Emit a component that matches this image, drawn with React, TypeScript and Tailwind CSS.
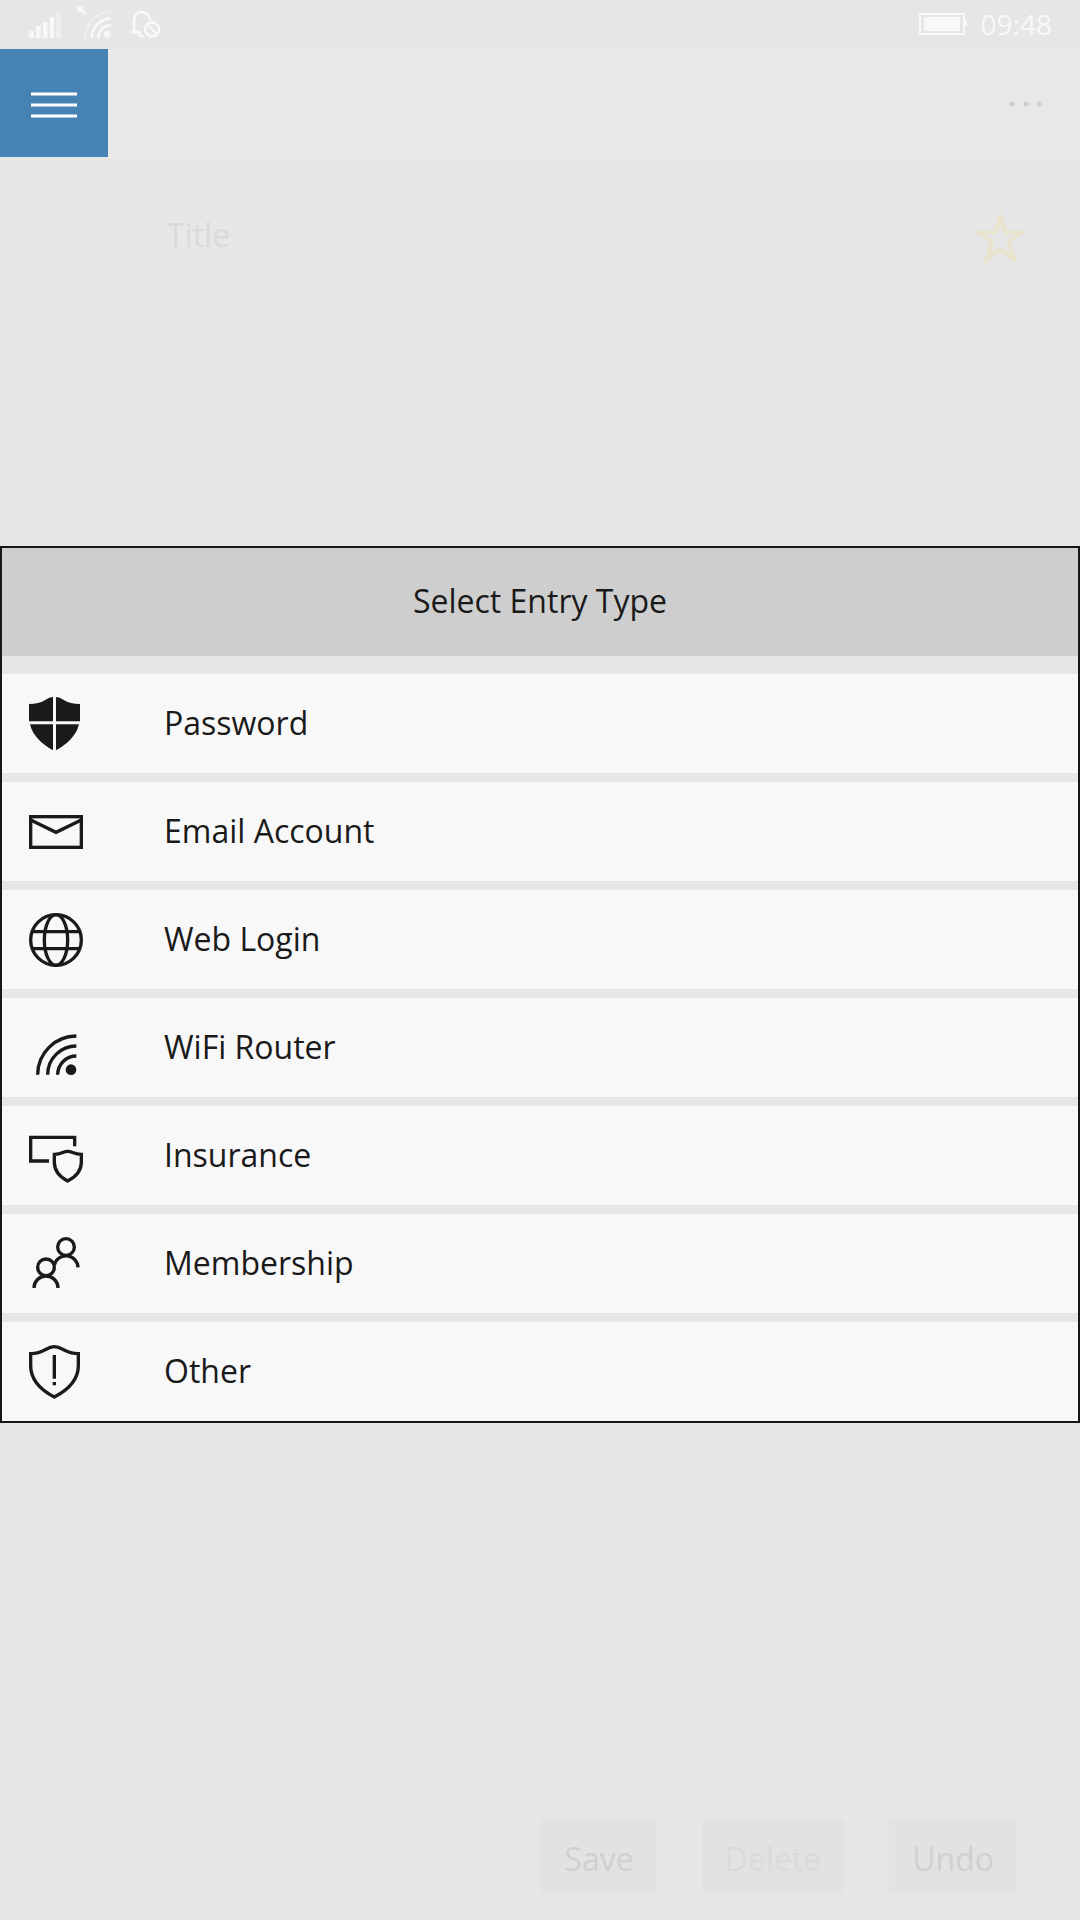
import { useState } from 'react';
import type { ReactNode } from 'react';

interface EntryType {
  id: string;
  label: string;
  icon: ReactNode;
}

const entryTypes: EntryType[] = [
  {
    id: 'password',
    label: 'Password',
    icon: (
      <g fill="currentColor" stroke="none">
        <path d="M0 21C20 21 36 17 50 8Q60 1 72 0V73H0Z" />
        <path d="M81 0Q93 1 103 8C117 17 133 21 153 21V73H81Z" />
        <path d="M3 82H72V160C40 143 10 115 3 82Z" />
        <path d="M81 82H150C143 115 113 143 81 160Z" />
      </g>
    ),
  },
  {
    id: 'email',
    label: 'Email Account',
    icon: (
      <>
        <rect x="5" y="35" width="152" height="92" />
        <path d="M5 45L81 82L157 45" />
      </>
    ),
  },
  {
    id: 'web',
    label: 'Web Login',
    icon: (
      <>
        <circle cx="81" cy="81" r="76" />
        <ellipse cx="81" cy="81" rx="35" ry="76" />
        <path d="M9 56H153M9 107H153" />
      </>
    ),
  },
  {
    id: 'wifi',
    label: 'WiFi Router',
    icon: (
      <>
        <path d="M26 161A116 116 0 0 1 142 45M56 161A86 86 0 0 1 142 75M86 161A56 56 0 0 1 142 105" />
        <circle cx="126" cy="146" r="16" fill="currentColor" stroke="none" />
      </>
    ),
  },
  {
    id: 'insurance',
    label: 'Insurance',
    icon: (
      <>
        <path d="M60 96H5V25H137V52" />
        <path d="M116 67C103 67 98 76 76 76V100C76 127 92 144 116 156C140 144 157 127 157 100V76C135 76 129 67 116 67Z" />
      </>
    ),
  },
  {
    id: 'membership',
    label: 'Membership',
    icon: (
      <>
        <circle cx="111" cy="30" r="25" />
        <path d="M76 84A36 36 0 0 1 147 91" />
        <circle cx="51" cy="91" r="25" />
        <path d="M15 153A36 36 0 0 1 87 153" />
      </>
    ),
  },
  {
    id: 'other',
    label: 'Other',
    icon: (
      <>
        <path d="M76 5C50 5 48 25 5 26V62C5 107 40 137 76 156C112 137 148 107 148 62V26C105 25 102 5 76 5Z" />
        <path d="M76 30V101M76 111V121" />
      </>
    ),
  },
];

function StatusBar() {
  return (
    <div className="flex h-[49px] items-center justify-between px-7 pb-px text-[#f8f8f8]">
      <svg width="134" height="40" viewBox="84 12 402 120" fill="none" stroke="currentColor" strokeWidth="8">
        <g fill="currentColor" stroke="none">
          <path d="M87 93H102V114H87ZM108 78H122V114H108ZM129 66H142V114H129ZM149 51H162V114H149Z" />
          <path d="M168 39H183V114H168Z" opacity="0.45" />
          <path d="M231 18H252L246 25L259 39L253 45L239 32L231 39Z" />
          <circle cx="322" cy="103" r="11" />
        </g>
        <path d="M255 114A79 79 0 0 1 333 35" opacity="0.45" />
        <path d="M275 114A59 59 0 0 1 333 55M295 114A39 39 0 0 1 333 75" />
        <path d="M450 60C448 44 438 36 425 36C411 36 402 46 402 60V96M391 96H424M415 96C415 106 421 110 431 109" />
        <circle cx="456" cy="88" r="21" />
        <path d="M441 73L471 103" />
      </svg>
      <div className="flex items-center gap-[14px]">
        <svg width="48" height="24" viewBox="0 0 48 24" fill="none" stroke="currentColor" strokeWidth="2">
          <rect x="1" y="2" width="44" height="20" />
          <rect x="5" y="5" width="36" height="14" fill="currentColor" stroke="none" />
          <path d="M47 9V14" />
        </svg>
        <span className="text-[28px] leading-none">09:48</span>
      </div>
    </div>
  );
}

function AppBar() {
  return (
    <header className="flex h-[108px] items-center justify-between bg-[#e8e8e8]">
      <button aria-label="Menu" className="flex size-[108px] items-center justify-center bg-[#4682b4] pt-[4px] text-white">
        <svg width="46" height="28" viewBox="0 0 46 28" stroke="currentColor" strokeWidth="3">
          <path d="M0 3H46M0 14H46M0 25H46" />
        </svg>
      </button>
      <button aria-label="More" className="mr-[37px] pt-0.5 text-[#cecece]">
        <svg width="34" height="10" viewBox="0 0 34 10" fill="currentColor">
          <circle cx="3" cy="5" r="2.5" />
          <circle cx="17" cy="5" r="2.5" />
          <circle cx="30" cy="5" r="2.5" />
        </svg>
      </button>
    </header>
  );
}

function EntryForm() {
  const [title, setTitle] = useState('');

  return (
    <form className="flex flex-1 flex-col justify-between" onSubmit={e => e.preventDefault()}>
      <div className="flex items-center pt-[27px] pr-[53px] pl-[18px]">
        <div className="size-[108px] rounded-full bg-[#e5e5e5]" />
        <input
          type="text"
          aria-label="Title"
          placeholder="Title"
          value={title}
          onChange={e => setTitle(e.target.value)}
          className="ml-[18px] h-[72px] min-w-0 flex-1 bg-[#e7e7e7] px-[23px] pb-2 text-[32px] outline-none placeholder:text-[#dadada]"
        />
        <button type="button" aria-label="Favourite" className="ml-[18px] text-[#e9e4ce]">
          <svg width="54" height="54" viewBox="0 0 162 162" fill="currentColor" fillRule="evenodd">
            <path d="M82 0L101 57H162L114 95L134 160L82 124L30 160L50 95L0 57H64ZM82 37L72 70H36L64 92L54 127L82 109L110 127L100 92L128 70H92Z" />
          </svg>
        </button>
      </div>
      <div className="flex justify-end gap-[45px] pr-[63px] pb-[27px] text-[32px] leading-none text-[#d0d0d0]">
        <button type="submit" className="h-[73px] bg-[#e2e2e2] px-[23px] pt-1">Save</button>
        <button type="button" disabled className="h-[73px] bg-[#e2e2e2] px-[23px] pt-1 text-[#dadada]">Delete</button>
        <button type="reset" className="h-[73px] bg-[#e2e2e2] px-[23px] pt-1">Undo</button>
      </div>
    </form>
  );
}

function EntryTypeDialog({ onSelect }: { onSelect: (id: string) => void }) {
  return (
    <div className="absolute inset-x-0 top-[49px] bottom-0 flex items-center">
      <div role="dialog" aria-labelledby="entry-type-title" className="w-full border-2 border-[#171717] bg-[#e6e6e6] text-[#1a1a1a]">
        <h1 id="entry-type-title" className="flex h-[108px] items-center justify-center bg-[#cecece] pb-0.5 text-[32px]">
          Select Entry Type
        </h1>
        <ul className="flex flex-col gap-[9px] pt-[18px]">
          {entryTypes.map(({ id, label, icon }) => (
            <li key={id}>
              <button
                onClick={() => onSelect(id)}
                className="flex h-[99px] w-full items-center gap-[81px] bg-[#f8f8f8] pt-px pl-[27px] text-left text-[32px]"
              >
                <svg width="54" height="54" viewBox="0 0 162 162" fill="none" stroke="currentColor" strokeWidth="10">
                  {icon}
                </svg>
                <span className="pb-[3px]">{label}</span>
              </button>
            </li>
          ))}
        </ul>
      </div>
    </div>
  );
}

export default function App() {
  const [entryType, setEntryType] = useState<string | null>(null);

  return (
    <div className="relative flex min-h-screen flex-col bg-[#e6e6e6] font-['Open_Sans','Noto_Sans',sans-serif]">
      <StatusBar />
      <AppBar />
      <EntryForm />
      {!entryType && <EntryTypeDialog onSelect={setEntryType} />}
    </div>
  );
}
